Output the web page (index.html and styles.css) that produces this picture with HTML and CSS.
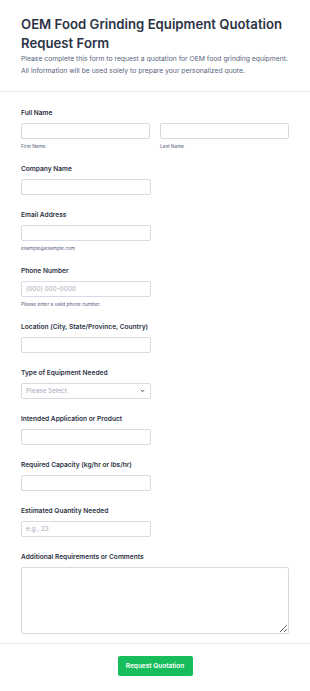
FILE: index.html
```html
<!DOCTYPE html>
<html lang="en">
<head>
    <meta charset="UTF-8">
    <meta name="viewport" content="width=device-width, initial-scale=1.0">
    <title>OEM Food Grinding Equipment Quotation Request Form</title>
    <link rel="stylesheet" href="styles.css">
</head>
<body>
    <form class="form">
        <div class="header">
            <h1>OEM Food Grinding Equipment Quotation Request Form</h1>
            <p>Please complete this form to request a quotation for OEM food grinding equipment. All information will be used solely to prepare your personalized quote.</p>
        </div>

        <div class="fields">
            <div class="field">
                <label class="label">Full Name</label>
                <div class="name-row">
                    <div class="name-col">
                        <input type="text" class="input">
                        <span class="sublabel">First Name</span>
                    </div>
                    <div class="name-col">
                        <input type="text" class="input">
                        <span class="sublabel">Last Name</span>
                    </div>
                </div>
            </div>

            <div class="field">
                <label class="label">Company Name</label>
                <input type="text" class="input short">
            </div>

            <div class="field">
                <label class="label">Email Address</label>
                <input type="email" class="input short">
                <span class="sublabel">example@example.com</span>
            </div>

            <div class="field">
                <label class="label">Phone Number</label>
                <input type="tel" class="input short" placeholder="(000) 000-0000">
                <span class="sublabel">Please enter a valid phone number.</span>
            </div>

            <div class="field">
                <label class="label">Location (City, State/Province, Country)</label>
                <input type="text" class="input short">
            </div>

            <div class="field">
                <label class="label">Type of Equipment Needed</label>
                <div class="select short">
                    <span>Please Select</span>
                    <svg width="5" height="4" viewBox="0 0 5 4"><path d="M1 1.2l1.5 1.5 1.5-1.5" fill="none" stroke="#2c3345" stroke-width="0.9" stroke-linecap="round" stroke-linejoin="round"/></svg>
                </div>
            </div>

            <div class="field">
                <label class="label">Intended Application or Product</label>
                <input type="text" class="input short">
            </div>

            <div class="field">
                <label class="label">Required Capacity (kg/hr or lbs/hr)</label>
                <input type="text" class="input short">
            </div>

            <div class="field">
                <label class="label">Estimated Quantity Needed</label>
                <input type="text" class="input short" placeholder="e.g., 23">
            </div>

            <div class="field">
                <label class="label">Additional Requirements or Comments</label>
                <textarea class="input textarea"></textarea>
            </div>
        </div>

        <div class="footer">
            <button type="button" class="submit">Request Quotation</button>
        </div>
    </form>
</body>
</html>
```

FILE: styles.css
```css
body{
    margin:0;
    font-family: Inter, "Noto Sans", sans-serif;
    background-color:#fff;
    color:#2c3345;
}
.form{
    width:310px;
}
.header{
    padding:15px 21px 14px;
    border-bottom:1px solid #eceef3;
}
.header h1{
    margin:0;
    font-size:13.2px;
    line-height:19px;
    font-weight:600;
    color:#2c3345;
}
.header p{
    margin:0;
    font-size:6.8px;
    line-height:12px;
    color:#57647e;
}
.fields{
    padding:16px 21px 9px;
    border-bottom:1px solid #eceef3;
}
.field{
    display:flex;
    flex-direction:column;
    align-items:flex-start;
    margin-bottom:15px;
}
.field:last-child{
    margin-bottom:0;
}
.label{
    font-size:6.6px;
    line-height:10px;
    font-weight:600;
    margin-bottom:5px;
    color:#2c3345;
}
.name-row{
    display:flex;
    gap:10px;
    width:100%;
}
.name-col{
    flex:1;
    display:flex;
    flex-direction:column;
}
.input{
    box-sizing:border-box;
    height:16px;
    width:100%;
    margin:0;
    padding:0 4px;
    border:1px solid #d7dbe4;
    border-radius:2px;
    background:#fff;
    font-family:inherit;
    font-size:6.4px;
    color:#2c3345;
    outline:none;
}
.input::placeholder{
    color:#a3a9b8;
}
.short{
    width:130px;
}
.textarea{
    height:67px;
    resize:vertical;
}
.sublabel{
    font-size:4.8px;
    line-height:7px;
    margin-top:4px;
    margin-bottom:-1px;
    color:#57647e;
}
.select{
    box-sizing:border-box;
    height:16px;
    display:flex;
    align-items:center;
    justify-content:space-between;
    padding:0 5px 0 4px;
    border:1px solid #d7dbe4;
    border-radius:2px;
    font-size:6.4px;
    color:#a3a9b8;
}
.footer{
    display:flex;
    justify-content:center;
    padding:12px 0 16px;
}
.submit{
    width:75px;
    height:20px;
    border:none;
    border-radius:2px;
    background-color:#18bd5b;
    color:#fff;
    font-family:inherit;
    font-size:6.5px;
    font-weight:600;
    cursor:pointer;
}
```
